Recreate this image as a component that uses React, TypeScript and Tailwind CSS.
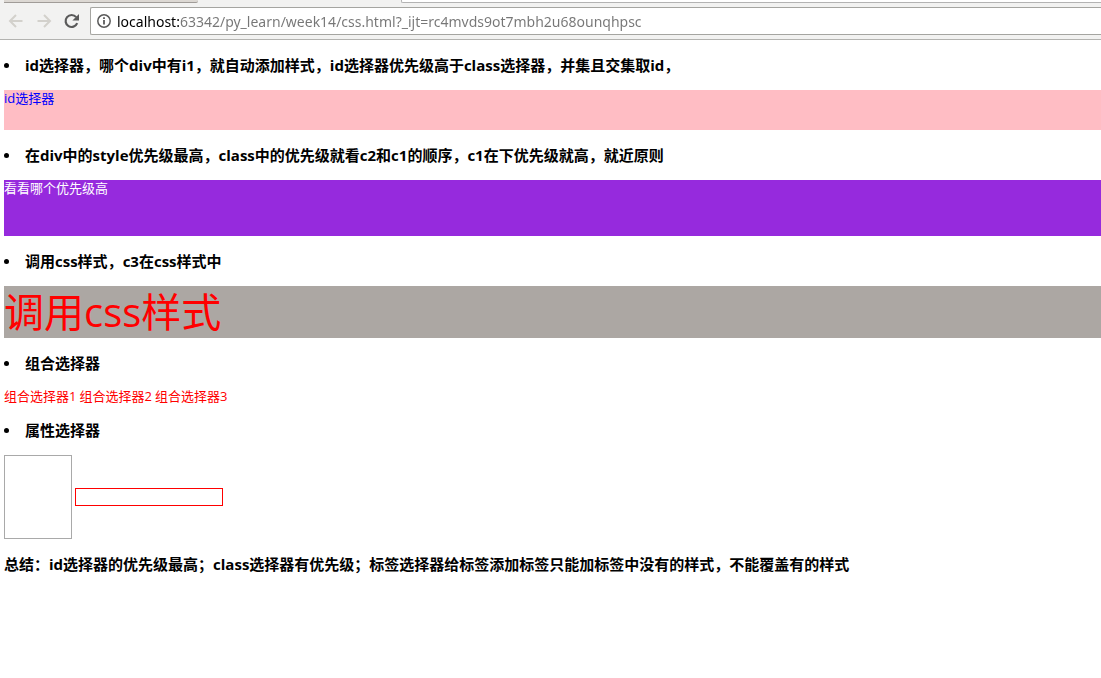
import type { ReactNode } from 'react';

const ADDRESS = 'localhost:63342/py_learn/week14/css.html?_ijt=rc4mvds9ot7mbh2u68ounqhpsc';

const COMBINED = ['组合选择器1', '组合选择器2', '组合选择器3'];

export default function App() {
  return (
    <div className="min-h-screen bg-white font-['Open_Sans','Noto_Sans_CJK_SC',sans-serif] text-[13px] leading-[17px] text-black">
      <BrowserBar />

      <main className="pl-1">
        <Topic>id选择器，哪个div中有i1，就自动添加样式，id选择器优先级高于class选择器，并集且交集取id，</Topic>
        <div className="h-10 bg-[#ffbdc4] text-[#0000ff]">id选择器</div>

        <Topic>在div中的style优先级最高，class中的优先级就看c2和c1的顺序，c1在下优先级就高，就近原则</Topic>
        <div className="h-14 bg-[#962add] text-white">看看哪个优先级高</div>

        <Topic>调用css样式，c3在css样式中</Topic>
        <div className="bg-[#aca7a3] text-[40px] leading-[52px] text-[#ff0000]">调用css样式</div>

        <Topic>组合选择器</Topic>
        <div className="flex gap-[3px] text-[#ff0000]">
          {COMBINED.map((label) => (
            <span key={label}>{label}</span>
          ))}
        </div>

        <Topic>属性选择器</Topic>
        <div className="flex items-center gap-[3px]">
          <input type="text" aria-label="属性选择器1" className="h-[84px] w-[68px] border border-[#a9a9a9] outline-none" />
          <input type="text" aria-label="属性选择器2" className="h-[18px] w-[148px] border border-[#ff0000] outline-none" />
        </div>

        <h4 className="py-[15px] text-[15px] leading-5 font-bold">
          总结：id选择器的优先级最高；class选择器有优先级；标签选择器给标签添加标签只能加标签中没有的样式，不能覆盖有的样式
        </h4>
      </main>
    </div>
  );
}

function Topic({ children }: { children: ReactNode }) {
  return (
    <div className="flex items-center py-[15px]">
      <span className="mr-4 h-[5px] w-[5px] rounded-full bg-black" aria-hidden="true" />
      <h4 className="text-[15px] leading-5 font-bold">{children}</h4>
    </div>
  );
}

function BrowserBar() {
  return (
    <header className="border-b border-[#b3b3b0] bg-[#f2f2f1]">
      {/* Bottom edge of the tab strip */}
      <div className="flex h-[3px]">
        <div className="ml-1 w-[194px] rounded-br-xs border-b border-[#a09c98] bg-[#dcd8d3]" />
        <div className="w-[203px]" />
        <div className="flex-1 rounded-bl-xs border-b border-l border-[#b3b3b3] bg-white" />
      </div>

      <div className="flex h-9 items-center pl-2">
        <button type="button" aria-label="Back" className="mr-3 text-[#d3d1cc]">
          <Arrow />
        </button>
        <button type="button" aria-label="Forward" className="mr-3 rotate-180 text-[#d3d1cc]">
          <Arrow />
        </button>
        <button type="button" aria-label="Reload" className="mr-[10px] text-[#5a5a5a]">
          <svg width="16" height="16" viewBox="0 0 16 16" fill="none">
            <path d="M13.2 10.2A6 6 0 1 1 12.2 4.1" stroke="currentColor" strokeWidth="2.2" />
            <path d="M15 1v6.6H8.4z" fill="currentColor" />
          </svg>
        </button>

        <div className="flex h-7 flex-1 items-center rounded-l-xs border border-r-0 border-[#a5a5a1] bg-white pl-[6px]">
          <svg width="14" height="14" viewBox="0 0 14 14" fill="none" className="mr-[6px] text-[#5a5a5a]">
            <circle cx="7" cy="7" r="6.2" stroke="currentColor" strokeWidth="1.5" />
            <path d="M7 6v4.5M7 3.3v1.7" stroke="currentColor" strokeWidth="1.8" />
          </svg>
          {/* The host is black, the rest of the address is grey */}
          <input
            type="text"
            aria-label="Address"
            defaultValue={ADDRESS}
            className="h-6 min-w-0 flex-1 bg-linear-to-r from-black from-[62px] to-[#767676] to-[62px] bg-clip-text font-['Noto_Sans',sans-serif] text-[14px] text-transparent outline-none"
          />
        </div>
      </div>
    </header>
  );
}

function Arrow() {
  return (
    <svg width="16" height="16" viewBox="0 0 16 16" fill="none">
      <path d="M14.5 8H2M8 2 2 8l6 6" stroke="currentColor" strokeWidth="2" />
    </svg>
  );
}
